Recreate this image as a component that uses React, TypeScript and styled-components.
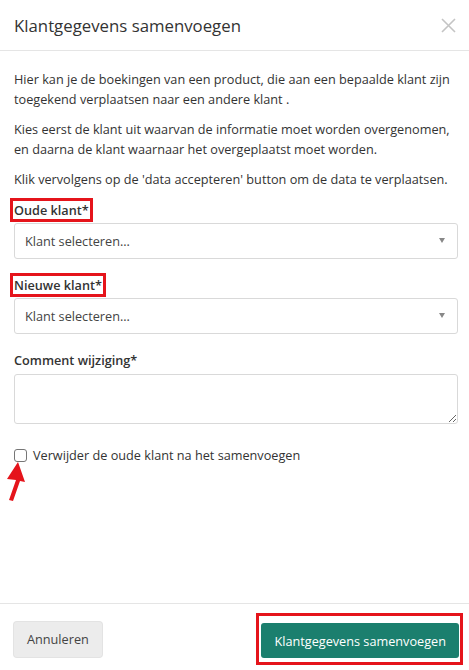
import styled, { createGlobalStyle } from "styled-components";

const GlobalStyle = createGlobalStyle`
  html, body {
    margin: 0;
    padding: 0;
    background: #fff;
  }
  body {
    font-family: "Open Sans", "Liberation Sans", sans-serif;
    color: #333;
  }
  * {
    box-sizing: border-box;
  }
`;

const Modal = styled.div`
  width: 469px;
  height: 670px;
  display: flex;
  flex-direction: column;
  background: #fff;
`;

const Header = styled.div`
  height: 51px;
  padding: 0 12px 0 14px;
  display: flex;
  align-items: center;
  justify-content: space-between;
  border-bottom: 1px solid #e5e5e5;
`;

const Title = styled.h4`
  margin: 0;
  font-size: 16.8px;
  font-weight: 400;
  color: #333;
`;

const CloseButton = styled.button`
  border: 0;
  background: none;
  padding: 0;
  width: 18px;
  height: 18px;
  display: flex;
  align-items: center;
  justify-content: center;
  cursor: pointer;
`;

const Body = styled.div`
  flex: 1;
  padding: 19px 11px 0 14px;
`;

const Text = styled.p`
  margin: 0 0 11px;
  font-size: 12.7px;
  line-height: 19.5px;
`;

const Field = styled.div<{ $first?: boolean }>`
  display: flex;
  flex-direction: column;
  align-items: flex-start;
  margin-top: ${(p) => (p.$first ? "1px" : "17px")};
`;

const Label = styled.label<{ $marked?: boolean }>`
  font-size: 12.7px;
  font-weight: 600;
  line-height: 18px;
  padding: 0 1px;
  margin-left: -1px;
  outline: ${(p) => (p.$marked ? "3px solid #e5141b" : "none")};
  margin-bottom: ${(p) => (p.$marked ? "4px" : "5px")};
`;

const Select = styled.div`
  width: 100%;
  height: 36px;
  border: 1px solid #d9d9d9;
  border-radius: 3px;
  padding: 0 12px 0 10px;
  display: flex;
  align-items: center;
  justify-content: space-between;
  font-size: 12.7px;
  color: #444;
`;

const Caret = styled.span`
  width: 0;
  height: 0;
  border-left: 3.5px solid transparent;
  border-right: 3.5px solid transparent;
  border-top: 5px solid #888;
`;

const TextArea = styled.textarea`
  display: block;
  width: 100%;
  height: 50px;
  min-height: 50px;
  margin: 0;
  border: 1px solid #d9d9d9;
  border-radius: 3px;
  resize: vertical;
  font-family: inherit;
  font-size: 12.7px;
`;

const CheckRow = styled.label`
  position: relative;
  margin-top: 22px;
  display: flex;
  align-items: center;
  gap: 6px;
  font-size: 12.7px;
  line-height: 19.5px;
`;

const Box = styled.span`
  flex-shrink: 0;
  width: 13px;
  height: 13px;
  border: 1px solid #767676;
  border-radius: 3px;
  background: #fff;
`;

const Arrow = styled.svg`
  position: absolute;
  left: -10px;
  top: 15px;
`;

const Footer = styled.div`
  border-top: 1px solid #e5e5e5;
  padding: 9px 6px 5px 14px;
  display: flex;
  align-items: center;
  justify-content: space-between;
  height: 67px;
`;

const Button = styled.button<{ $primary?: boolean }>`
  height: 35px;
  padding: 0 13px;
  border: 0;
  border-radius: 3px;
  font-family: inherit;
  font-size: 12.7px;
  color: ${(p) => (p.$primary ? "#fff" : "#444")};
  background: ${(p) => (p.$primary ? "#1b7f6e" : "#ececec")};
  box-shadow: ${(p) => (p.$primary ? "none" : "0 0 0 1px #e3e3e3")};
`;

const Marker = styled.div`
  border: 3px solid #e5141b;
  padding: 7px 1px 4px 2px;
`;

export default function App() {
  return (
    <>
      <GlobalStyle />
      <Modal>
        <Header>
          <Title>Klantgegevens samenvoegen</Title>
          <CloseButton aria-label="Sluiten">
            <svg width="15" height="15" viewBox="0 0 15 15">
              <path d="M1 1 L14 14 M14 1 L1 14" stroke="#c4c4c4" strokeWidth="1.6" />
            </svg>
          </CloseButton>
        </Header>
        <Body>
          <Text>
            Hier kan je de boekingen van een product, die aan een bepaalde klant zijn
            toegekend verplaatsen naar een andere klant .
          </Text>
          <Text>
            Kies eerst de klant uit waarvan de informatie moet worden overgenomen,
            en daarna de klant waarnaar het overgeplaatst moet worden.
          </Text>
          <Text>Klik vervolgens op de 'data accepteren' button om de data te verplaatsen.</Text>

          <Field $first>
            <Label $marked>Oude klant*</Label>
            <Select>
              Klant selecteren...
              <Caret />
            </Select>
          </Field>
          <Field>
            <Label $marked>Nieuwe klant*</Label>
            <Select>
              Klant selecteren...
              <Caret />
            </Select>
          </Field>
          <Field>
            <Label>Comment wijziging*</Label>
            <TextArea />
          </Field>

          <CheckRow>
            <Box />
            Verwijder de oude klant na het samenvoegen
            <Arrow width="22" height="42" viewBox="0 0 22 42">
              <path d="M14 1 L21 21 L16 20 L9 40 L5 39 L12 19 L3 18 Z" fill="#e5141b" />
            </Arrow>
          </CheckRow>
        </Body>
        <Footer>
          <Button>Annuleren</Button>
          <Marker>
            <Button $primary>Klantgegevens samenvoegen</Button>
          </Marker>
        </Footer>
      </Modal>
    </>
  );
}
